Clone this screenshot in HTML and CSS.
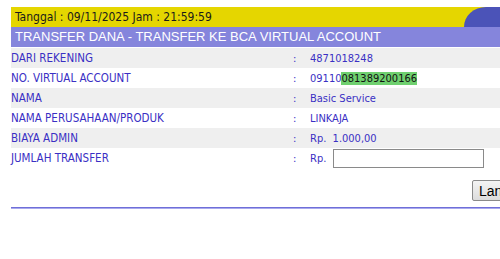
FILE: index.html
```html
<!DOCTYPE html>
<html lang="id">
<head>
    <meta charset="UTF-8">
    <title>Transfer ke BCA Virtual Account</title>
    <link rel="stylesheet" href="styles.css">
</head>
<body>
    <div class="page">
        <div class="topbar">
            <span class="date">Tanggal : 09/11/2025 Jam : 21:59:59</span>
            <span class="tab"></span>
        </div>
        <div class="title">TRANSFER DANA - TRANSFER KE BCA VIRTUAL ACCOUNT</div>

        <table class="form">
            <tr class="alt">
                <td class="label">DARI REKENING</td>
                <td class="sep">:</td>
                <td class="value">4871018248</td>
            </tr>
            <tr>
                <td class="label">NO. VIRTUAL ACCOUNT</td>
                <td class="sep">:</td>
                <td class="value">09110<span class="hl">081389200166</span></td>
            </tr>
            <tr class="alt">
                <td class="label">NAMA</td>
                <td class="sep">:</td>
                <td class="value">Basic Service</td>
            </tr>
            <tr>
                <td class="label">NAMA PERUSAHAAN/PRODUK</td>
                <td class="sep">:</td>
                <td class="value">LINKAJA</td>
            </tr>
            <tr class="alt">
                <td class="label">BIAYA ADMIN</td>
                <td class="sep">:</td>
                <td class="value">Rp.&nbsp;&nbsp;1.000,00</td>
            </tr>
            <tr>
                <td class="label">JUMLAH TRANSFER</td>
                <td class="sep">:</td>
                <td class="value">Rp.&nbsp;&nbsp;<input type="text" class="amount"></td>
            </tr>
        </table>

        <div class="actions">
            <button type="button">Lanjut</button>
        </div>
        <div class="rule"></div>
    </div>
</body>
</html>
```

FILE: styles.css
```css
html, body {
    overflow: hidden;
}
body {
    margin: 0;
    padding: 7px 0 0 11px;
    background: #fff;
    font-family: Tahoma, 'DejaVu Sans Condensed', 'DejaVu Sans', sans-serif;
}
.page {
    width: 560px;
}
.topbar {
    display: flex;
    height: 20px;
    background-color: #e5d600;
}
.date {
    padding: 3px 0 0 4px;
    font-size: 12px;
    color: #1a1a1a;
}
.tab {
    margin-left: auto;
    width: 107px;
    background-color: #4b53b8;
    border-top-left-radius: 22px 20px;
}
.title {
    height: 20px;
    padding-left: 4px;
    background-color: #8585dc;
    color: #fff;
    font-family: 'Liberation Sans', Arial, sans-serif;
    font-size: 13px;
    line-height: 20px;
}
.form {
    width: 100%;
    border-collapse: collapse;
    margin-top: 1px;
    font-size: 11px;
    color: #3a2fc4;
}
.form td {
    height: 20px;
    padding: 0;
}
.form tr.alt {
    background-color: #efefef;
}
.label {
    width: 282px;
    font-size: 11.5px;
}
.sep {
    width: 17px;
}
.hl {
    background-color: #6fd06f;
    color: #111;
}
.amount {
    width: 145px;
    height: 15px;
    padding: 1px 2px;
    border: 1px solid #8a8a8a;
    font-size: 11px;
    vertical-align: middle;
}
.actions {
    padding: 12px 0 6px 461px;
}
button {
    height: 21px;
    padding: 0 6px;
    background: linear-gradient(#f4f4f4, #dcdcdc);
    border: 1px solid #8a8a8a;
    border-radius: 2px;
    font-family: 'Liberation Sans', Arial, sans-serif;
    font-size: 14px;
    color: #000;
}
.rule {
    height: 1px;
    border-bottom: 1px solid #a9a9ee;
    background-color: #6f6fd8;
}
```
